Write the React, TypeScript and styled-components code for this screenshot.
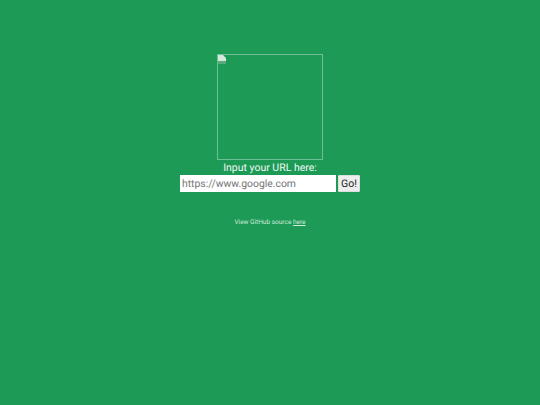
import React from 'react'
import styled, { createGlobalStyle } from 'styled-components'
// ______________________________________________________
//
const GlobalStyle = createGlobalStyle`
  html, body {
    margin: 0;
    height: 100%;
    background: #1c9a56;
  }
`
// ______________________________________________________
//
const Page = styled.div`
  display: flex;
  flex-direction: column;
  align-items: center;
  padding-top: 54px;
  font-family: Roboto, sans-serif;
  text-rendering: geometricPrecision;
  color: #eef8f2;
`
const LogoFrame = styled.div`
  box-sizing: border-box;
  width: 106px;
  height: 106px;
  border: 1px solid #70bf94;
`
const BrokenIcon = styled.svg`
  display: block;
  width: 8px;
  height: 9px;
`
const Label = styled.div`
  font-size: 10.5px;
  line-height: 15px;
`
const Form = styled.form`
  display: flex;
  gap: 2px;
`
const UrlInput = styled.input`
  box-sizing: border-box;
  width: 156px;
  height: 17px;
  padding: 0 2px;
  border: 0;
  border-radius: 0;
  outline: none;
  background: #fff;
  color: #222;
  font-family: inherit;
  font-size: 10.4px;
  text-rendering: geometricPrecision;
  &::placeholder {
    color: #757575;
    opacity: 1;
  }
`
const GoButton = styled.button`
  box-sizing: border-box;
  width: 22px;
  height: 17px;
  padding: 0;
  border: 1px solid #dedede;
  border-radius: 1px;
  background: #eeeeee;
  color: #222;
  font-family: inherit;
  font-size: 10.5px;
  text-rendering: geometricPrecision;
`
const Source = styled.div`
  margin-top: 25px;
  font-size: 6.5px;
  line-height: 10px;
  color: #cfeadb;
  a {
    color: inherit;
    text-decoration: underline;
  }
`
// ______________________________________________________
//
const App: React.FC = () => (
  <Page>
    <GlobalStyle />
    <LogoFrame>
      <BrokenIcon viewBox="0 0 8 9">
        <path d="M0 0h5l3 3v3H0z" fill="#d6e8dd" />
        <path d="M0 6h8v3H0z" fill="#58ab78" />
      </BrokenIcon>
    </LogoFrame>
    <Label>Input your URL here:</Label>
    <Form onSubmit={(e) => e.preventDefault()}>
      <UrlInput placeholder="https://www.google.com" />
      <GoButton>Go!</GoButton>
    </Form>
    <Source>
      View GitHub source <a href="#here">here</a>
    </Source>
  </Page>
)
// ______________________________________________________
//
export default App
